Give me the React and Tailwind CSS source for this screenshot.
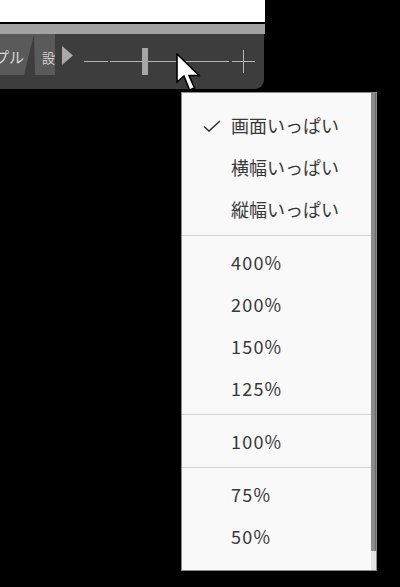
import React from "react";

// Menu de zoom ouvert sous la barre d'outils
const groupes = [
  [
    { label: "画面いっぱい", coche: true },
    { label: "横幅いっぱい" },
    { label: "縦幅いっぱい" },
  ],
  [{ label: "400%" }, { label: "200%" }, { label: "150%" }, { label: "125%" }],
  [{ label: "100%" }],
  [{ label: "75%" }, { label: "50%" }],
];

function Coche() {
  return (
    <svg width="18" height="12" viewBox="0 0 18 12" className="text-[#333]">
      <path d="M1 6.5 L6 11 L17 1" fill="none" stroke="currentColor" strokeWidth="1.6" />
    </svg>
  );
}

function Curseur() {
  return (
    <svg
      width="30"
      height="42"
      viewBox="0 0 30 42"
      className="absolute left-[176px] top-[53px]"
    >
      <path
        d="M1 1 L1 29 L8 23 L13.5 37 L18.5 35 L13 22.5 L23 22.5 Z"
        fill="white"
        stroke="black"
        strokeWidth="1.6"
        strokeLinejoin="miter"
      />
    </svg>
  );
}

export default function App() {
  return (
    <div
      className="relative w-[400px] h-[587px] bg-black overflow-hidden"
      style={{ fontFamily: '"Noto Sans CJK JP", "Noto Sans", sans-serif' }}
    >
      {/* Fenêtre principale en haut à gauche */}
      <div className="w-[265px]">
        <div className="h-[22px] bg-white" />
        <div className="h-[2px] bg-black" />
        <div className="h-[10px] bg-[#a3a3a3]" />
        <div className="h-[55px] w-[264px] bg-[#3d3d3d] rounded-br-[9px] flex flex-col">
          <div className="h-[41px] flex items-stretch">
            {/* Onglets */}
            <div
              className="w-[34px] bg-[#5a5a5a] flex items-center pt-[6px] text-[15px] text-[#d8d8d8] -mr-[1px] overflow-hidden"
              style={{ clipPath: "polygon(0 0, 34px 0, 24px 100%, 0 100%)" }}
            >
              <span className="-ml-[6px] whitespace-nowrap">プル</span>
            </div>
            <div
              className="w-[21px] ml-[1px] bg-[#5a5a5a] flex items-center pt-[6px] text-[13px] text-[#d8d8d8] overflow-hidden"
              style={{ clipPath: "polygon(0 0, 21px 0, 21px 100%, 1px 100%)" }}
            >
              <span className="ml-[8px] whitespace-nowrap">設</span>
            </div>
            {/* Lecture */}
            <div className="ml-[7px] flex items-center pt-[1px]">
              <svg width="11" height="19" viewBox="0 0 11 19">
                <path d="M0 0 L11 9.5 L0 19 Z" fill="#a8a8a8" />
              </svg>
            </div>
            {/* Curseur de zoom */}
            <div className="relative ml-[11px] w-[145px] flex items-start">
              <div className="h-px w-[24px] bg-[#b4b4b4] mt-[27px]" />
              <div className="h-px w-[119px] ml-[2px] bg-[#b4b4b4] mt-[27px]" />
              <div className="absolute left-[58px] top-[14px] w-[6px] h-[27px] bg-[#a6a6a6]" />
            </div>
            <div className="relative ml-[3px] w-[23px]">
              <div className="absolute left-0 top-[27px] w-[23px] h-px bg-[#b4b4b4]" />
              <div className="absolute left-[11px] top-[16px] w-px h-[23px] bg-[#b4b4b4]" />
            </div>
          </div>
        </div>
      </div>

      <Curseur />

      {/* Menu déroulant */}
      <div className="absolute left-[181px] top-[92px] w-[196px] h-[479px] bg-[#f9f9f9] border border-[#8c8c8c] flex">
        <div className="flex-1 pt-[11px] text-[18px] text-[#383838]">
          {groupes.map((groupe, i) => (
            <div key={i}>
              {i > 0 && <div className="my-[5px] h-px bg-[#d4d4d4]" />}
              {groupe.map((item) => (
                <div key={item.label} className="h-[42px] flex items-center">
                  <div className="w-[49px] flex justify-end pr-[10px] pt-[1px]">
                    {item.coche && <Coche />}
                  </div>
                  <span className={item.label.includes("%") ? "leading-none tracking-[1.2px]" : "leading-none"}>
                    {item.label}
                  </span>
                </div>
              ))}
            </div>
          ))}
        </div>
        {/* Barre de défilement */}
        <div className="w-[5px] flex flex-col">
          <div className="h-[458px] bg-[#8a8a8a] border-r border-[#6c6c6c]" />
          <div className="flex-1 bg-[#e4e4e4]" />
        </div>
      </div>
    </div>
  );
}
